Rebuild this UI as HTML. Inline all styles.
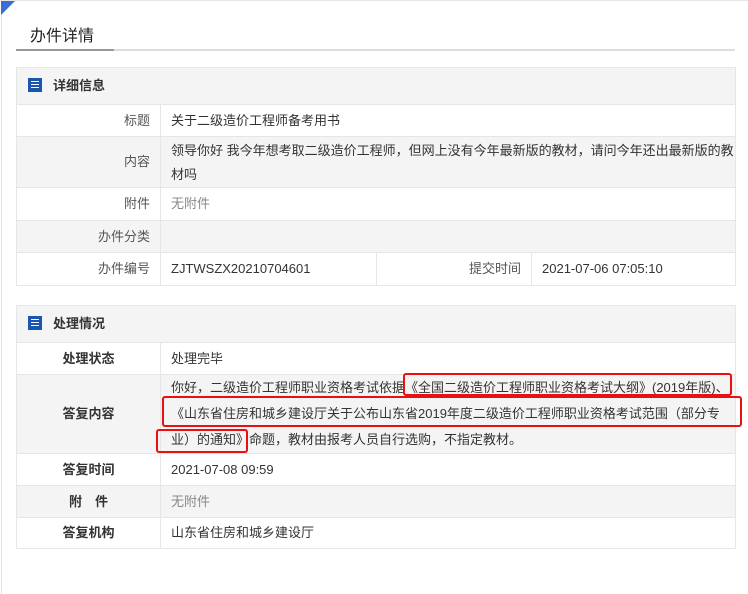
<!DOCTYPE html><html><head><meta charset="utf-8"><style>
body{margin:0;width:748px;height:594px;background:#fff;font-family:"Liberation Sans","Noto Sans CJK SC",sans-serif;font-size:13px;color:#333;position:relative;overflow:hidden}
.frame{position:absolute;left:1px;top:0;right:0;bottom:0;border-left:1px solid #e5e5e5;border-top:1px solid #e5e5e5}
.tri{position:absolute;left:1px;top:1px;width:0;height:0;border-top:14px solid #3a6fcf;border-right:14px solid transparent}
.title{position:absolute;left:30px;top:22px;font-size:16px;color:#222}
.ul1{position:absolute;left:16px;top:49px;width:98px;height:2px;background:#999}
.ul2{position:absolute;left:114px;top:49px;width:621px;height:2px;background:#ddd}
table{position:absolute;left:16px;width:720px;border-collapse:collapse;table-layout:fixed}
td{border:1px solid #e6e6e6;padding:0 10px;line-height:24px}
.hd td{background:#f4f4f4;font-weight:bold;font-size:13px;color:#333}
.g td{background:#f4f4f4}
.l{text-align:right;color:#555}
.b{text-align:center;font-weight:bold}
.icon{display:inline-block;width:12px;height:12px;background:#1a56b0;border:1px solid #1a56b0;vertical-align:-2px;margin-right:11px;position:relative;margin-left:1px}
.icon i{position:absolute;left:2px;right:2px;height:1px;background:#fff}
.red{position:absolute;border:2px solid #e81010;border-radius:3px}
.mut{color:#888}
.nw{white-space:nowrap}
</style></head><body>
<div class="frame"></div><div class="tri"></div>
<div class="title">办件详情</div><div class="ul1"></div><div class="ul2"></div>
<table style="top:67px">
<colgroup><col style="width:144px"><col style="width:216px"><col style="width:155px"><col></colgroup>
<tr class="hd" style="height:37px"><td colspan="4"><span class="icon"><i style="top:2px"></i><i style="top:5px"></i><i style="top:8px"></i></span>详细信息</td></tr>
<tr style="height:32px"><td class="l">标题</td><td colspan="3">关于二级造价工程师备考用书</td></tr>
<tr class="g" style="height:51px"><td class="l">内容</td><td colspan="3" class="nw" style="padding-top:1px">领导你好 我今年想考取二级造价工程师，但网上没有今年最新版的教材，请问今年还出最新版的教<br>材吗</td></tr>
<tr style="height:33px"><td class="l">附件</td><td colspan="3" class="mut">无附件</td></tr>
<tr class="g" style="height:32px"><td class="l">办件分类</td><td colspan="3"></td></tr>
<tr style="height:33px"><td class="l">办件编号</td><td>ZJTWSZX20210704601</td><td class="l">提交时间</td><td>2021-07-06 07:05:10</td></tr>
</table>
<table style="top:305px">
<colgroup><col style="width:144px"><col></colgroup>
<tr class="hd" style="height:37px"><td colspan="2"><span class="icon"><i style="top:2px"></i><i style="top:5px"></i><i style="top:8px"></i></span>处理情况</td></tr>
<tr style="height:32px"><td class="b">处理状态</td><td>处理完毕</td></tr>
<tr class="g" style="height:79px"><td class="b">答复内容</td><td class="nw" style="line-height:26px">你好，二级造价工程师职业资格考试依据《全国二级造价工程师职业资格考试大纲》(2019年版)、<br>《山东省住房和城乡建设厅关于公布山东省2019年度二级造价工程师职业资格考试范围（部分专<br>业）的通知》命题，教材由报考人员自行选购，不指定教材。</td></tr>
<tr style="height:32px"><td class="b">答复时间</td><td>2021-07-08 09:59</td></tr>
<tr class="g" style="height:32px"><td class="b">附　件</td><td class="mut">无附件</td></tr>
<tr style="height:31px"><td class="b">答复机构</td><td>山东省住房和城乡建设厅</td></tr>
</table>
<div class="red" style="left:403px;top:373px;width:325px;height:19px"></div>
<div class="red" style="left:162px;top:396px;width:576px;height:27px"></div>
<div class="red" style="left:156px;top:429px;width:88px;height:20px"></div>
</body></html>
